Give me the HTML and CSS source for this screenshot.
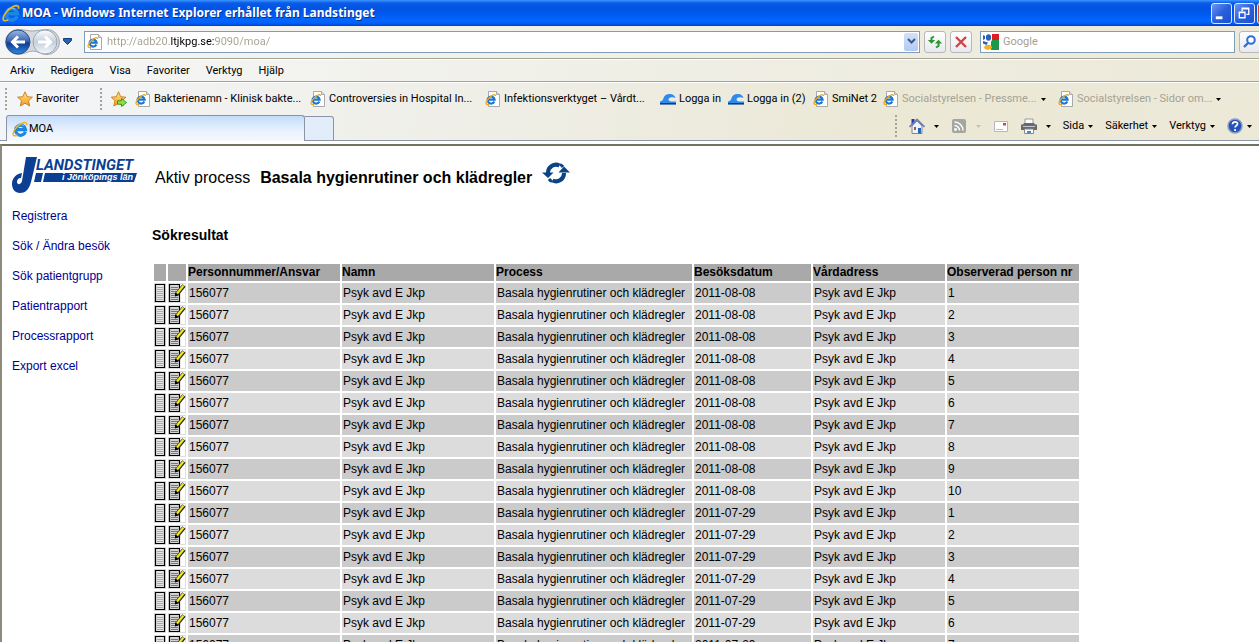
FILE: index.html
```html
<!DOCTYPE html>
<html lang="sv">
<head>
<meta charset="utf-8">
<title>MOA</title>
<link rel="stylesheet" href="styles.css">
</head>
<body>
<svg class="defs" aria-hidden="true">
  <defs>
    <linearGradient id="gold" x1="0" y1="0" x2="0" y2="1"><stop offset="0" stop-color="#ffe680"/><stop offset="1" stop-color="#f59a1d"/></linearGradient>
    <linearGradient id="ball" x1="0" y1="0" x2="0" y2="1"><stop offset="0" stop-color="#9db8e0"/><stop offset=".45" stop-color="#3d68b4"/><stop offset=".55" stop-color="#0f3c94"/><stop offset="1" stop-color="#2f8ae0"/></linearGradient>
    <linearGradient id="pale" x1="0" y1="0" x2="0" y2="1"><stop offset="0" stop-color="#fdfdfe"/><stop offset=".5" stop-color="#c3cedd"/><stop offset="1" stop-color="#f4f8fc"/></linearGradient>
    <symbol id="ie" viewBox="0 0 16 16">
      <path d="M13.4 10.8A5 5 0 1 1 13.600 8.600H5" fill="none" stroke="#1c86e0" stroke-width="3.200"/>
      <path d="M4.400 6a4.800 4.800 0 0 1 7.400-1.200" fill="none" stroke="#7cc8f8" stroke-width="1"/>
      <path d="M14.600 4.300C15.400 1.600 13 .6 9.600 2.400C5.500 4.500 1 9.800 1 13c0 2.400 2.400 2.200 4.600 1" fill="none" stroke="#f0b323" stroke-width="1.500"/>
    </symbol>
    <symbol id="page" viewBox="0 0 16 16">
      <path d="M3.500.5h8l3 3v12h-11z" fill="#fff" stroke="#a9a9ad"/>
      <path d="M11.500.5v3h3" fill="#ddd" stroke="#a9a9ad"/>
      <path d="M9.300 10.500A3.500 3.500 0 1 1 9.600 8.600H3.400" fill="none" stroke="#1976d2" stroke-width="2.200"/>
      <path d="M10.600 5c0-2.400-3.600-1-6.200 1.600S.2 12.500 1.400 13.200s2 .2 2.800-.2" fill="none" stroke="#f0a81c" stroke-width="1.300"/>
    </symbol>
    <symbol id="star" viewBox="0 0 16 16"><path d="M8 .8l2.200 4.900 5.200.5-3.900 3.500 1.200 5.300L8 12.200 3.300 15l1.200-5.300L.6 6.200l5.200-.5z" fill="url(#gold)" stroke="#c9781a" stroke-width=".9"/></symbol>
    <symbol id="staradd" viewBox="0 0 16 16"><path d="M7.500.8l2.200 4.900 5.200.5-3.900 3.500 1.200 5.300-4.700-2.800L2.800 15 4 9.700.3 6.200l5-.5z" fill="url(#gold)" stroke="#c9781a" stroke-width=".9"/><path d="M6.500 9.800h4V7.500l5 4-5 4v-2.300h-4z" fill="#8be04e" stroke="#2f8f1e" stroke-width=".9"/></symbol>
    <symbol id="cloud" viewBox="0 0 16 12"><path d="M0 11V8.500C2.500 8 3 7 3.500 5 4.500 2 7 .8 10 1c3 .2 5 1.600 5.500 4-2-.8-3.500-.8-5.500-.2C7.500 5.500 8.500 8.500 11 8.500H16V11z" fill="#2d8bea"/><path d="M0 10h16v1.600H0z" fill="#0a3f86"/></symbol>
    <symbol id="doc" viewBox="0 0 12 20"><path d="M0 0h12v20H0z" fill="#d8d8d8"/><path d="M1.500 1.500h9v17h-9z" fill="#e6e6e6" stroke="#000" stroke-width="1.200"/><path d="M3 4.500h6M3 6.500h6M3 8.500h6M3 10.500h6M3 12.500h6M3 14.500h6M3 16.500h6" stroke="#aaa"/></symbol>
    <symbol id="edit" viewBox="0 0 18 20"><path d="M0 0h18v20H0z" fill="#ddd"/><path d="M1 1h16v18H1z" fill="#fff"/><path d="M1.500 1.500h10v17h-10z" fill="#d4d4d4" stroke="#000" stroke-width="1.200"/><path d="M3 4.500h7M3 6.500h7M3 8.500h5M3 10.500h4M3 12.500h5M3 14.500h7M3 16.500h7" stroke="#777"/><path d="M8.500 11.500L16 2.500" stroke="#222" stroke-width="4.200"/><path d="M9 10.500l6.500-8" stroke="#f2e818" stroke-width="2.200"/><path d="M7 9.500l3.500 3L7 13.500z" fill="#000"/></symbol>
    <symbol id="down" viewBox="0 0 5 3"><path d="M0 0h5L2.500 3z" fill="currentColor"/></symbol>
  </defs>
</svg>

<header class="titlebar">
  <svg class="i18"><use href="#ie"/></svg>
  <span class="title">MOA - Windows Internet Explorer erhållet från Landstinget</span>
  <div class="winbtns">
    <button class="winbtn" aria-label="Minimera"><svg viewBox="0 0 20 20"><path d="M4 13h7v3H4z" fill="#fff"/></svg></button>
    <button class="winbtn" aria-label="Återställ"><svg viewBox="0 0 20 20"><path d="M7.500 8V4.500h7v6.500H12M7 5h8" fill="none" stroke="#fff" stroke-width="1.400"/><path d="M4.500 8.500h6v6h-6zM4 9h7" fill="none" stroke="#fff" stroke-width="1.400"/></svg></button>
    <button class="winbtn close" aria-label="Stäng"><svg viewBox="0 0 20 20"><path d="M5 5l10 10M15 5L5 15" stroke="#fff" stroke-width="2"/></svg></button>
  </div>
</header>

<div class="navbar">
  <div class="travel">
    <svg class="travelbg" viewBox="0 0 56 28"><path d="M14 1.500C20 1.500 23 3 28 3s10-1.500 15-1.500a12.500 12.500 0 0 1 0 25C37 26.500 34 23 29 23s-9 3.500-15 3.500a12.500 12.500 0 0 1 0-25z" fill="#d5d8dc" stroke="#a3a6aa"/></svg>
    <button class="round" aria-label="Bakåt"><svg viewBox="0 0 26 26"><circle cx="13" cy="13" r="12" fill="url(#ball)" stroke="#2b4c86"/><path d="M20 13H8M13 7.500L7.500 13l5.500 5.500" fill="none" stroke="#fff" stroke-width="3"/></svg></button>
    <button class="round" aria-label="Framåt"><svg viewBox="0 0 26 26"><circle cx="13" cy="13" r="12" fill="url(#pale)" stroke="#9ba6b5"/><path d="M6 13h12M13 7.500l5.500 5.500-5.500 5.500" fill="none" stroke="#fff" stroke-width="3"/></svg></button>
  </div>
  <button class="bare recent" aria-label="Senaste sidor"><svg viewBox="0 0 9 7"><path d="M.5.5h8v2L4.500 6.500.5 2.500z" fill="#2b62b0" stroke="#12407f"/></svg></button>
  <div class="box address">
    <svg class="i16"><use href="#page"/></svg>
    <input class="url" type="text" aria-label="Adress" value="http://adb20.ltjkpg.se:9090/moa/">
    <button class="drop" aria-label="Visa adresser"><svg viewBox="0 0 9 7"><path d="M1 1l3.500 3.500L8 1" fill="none" stroke="#3c5a86" stroke-width="2"/></svg></button>
  </div>
  <button class="tool" aria-label="Uppdatera"><svg viewBox="0 0 16 16"><path d="M7 2.500L4.500 4v2.500" fill="none" stroke="#2f9530" stroke-width="2"/><path d="M.8 6h7.400L4.500 9.800zM7.800 9.500h7.400L11.500 5.700z" fill="#2f9530"/><path d="M9 13.500l2.500-1.500V9" fill="none" stroke="#2f9530" stroke-width="2"/></svg></button>
  <button class="tool" aria-label="Stoppa"><svg viewBox="0 0 16 16"><path d="M3 3l10 10M13 3L3 13" stroke="#cf4444" stroke-width="2.400"/></svg></button>
  <div class="box search">
    <svg class="i16" viewBox="0 0 16 16"><path d="M0 0h16v16H0z" fill="#fff"/><path d="M9 0h7v6H9z" fill="#e11b22"/><path d="M9 6h7v10H8V8z" fill="#1a9a48"/><ellipse cx="5.500" cy="3.500" rx="2.600" ry="3.300" fill="#2a62b8"/><path d="M0 1l2 1v3L0 6zM0 7l5 1.500L3.500 11 0 9.500z" fill="#2a62b8"/><ellipse cx="5" cy="13.300" rx="3.800" ry="2.500" fill="#f5b21c"/></svg>
    <input class="query" type="text" aria-label="Sök" placeholder="Google">
  </div>
  <button class="tool go" aria-label="Sök på webben"><svg viewBox="0 0 16 16"><circle cx="9" cy="6" r="3.800" fill="#fff" stroke="#2f6fd6" stroke-width="2"/><path d="M6 9l-4 4" stroke="#2f6fd6" stroke-width="2.400"/></svg></button>
</div>

<nav class="menubar">
  <button class="bare">Arkiv</button><button class="bare">Redigera</button><button class="bare">Visa</button><button class="bare">Favoriter</button><button class="bare">Verktyg</button><button class="bare">Hjälp</button>
</nav>

<div class="chrome">
<div class="favbar">
  <span class="grip"></span>
  <button class="bare fav"><svg class="i16"><use href="#star"/></svg>Favoriter</button>
  <span class="grip"></span>
  <button class="bare add" aria-label="Lägg till i Favoriter"><svg class="i16"><use href="#staradd"/></svg></button>
  <a class="mark long" href="#"><svg class="i16"><use href="#page"/></svg>Bakterienamn - Klinisk bakte...</a>
  <a class="mark long" href="#"><svg class="i16"><use href="#page"/></svg>Controversies in Hospital In...</a>
  <a class="mark long" href="#"><svg class="i16"><use href="#page"/></svg>Infektionsverktyget – Vårdt...</a>
  <a class="mark live" href="#"><svg class="cloud"><use href="#cloud"/></svg>Logga in</a>
  <a class="mark live2" href="#"><svg class="cloud"><use href="#cloud"/></svg>Logga in (2)</a>
  <a class="mark smi" href="#"><svg class="i16"><use href="#page"/></svg>SmiNet 2</a>
  <a class="mark long feed" href="#"><svg class="i16"><use href="#page"/></svg><span class="feedname">Socialstyrelsen - Pressme...</span><svg class="caret"><use href="#down"/></svg></a>
  <a class="mark long feed" href="#"><svg class="i16"><use href="#page"/></svg><span class="feedname">Socialstyrelsen - Sidor om...</span><svg class="caret"><use href="#down"/></svg></a>
</div>
<div class="tabrow">
  <button class="tab"><svg class="i16"><use href="#ie"/></svg>MOA</button>
  <button class="newtab" aria-label="Ny flik"></button>
  <div class="commands">
    <span class="grip"></span>
    <button class="bare cmd wide" aria-label="Startsida"><svg class="i16" viewBox="0 0 16 16"><path d="M2.500 1h3v5h-3z" fill="#2335b8"/><path d="M3 8l5-5 5 5v7.500H3z" fill="#eef3fb" stroke="#7c88a0"/><path d="M.5 9L8 1.500 15.500 9" fill="none" stroke="#6c7fa8" stroke-width="1.600"/><path d="M9 10h3v5.500H9z" fill="#2b63b4"/><path d="M5 9h2v3H5z" fill="#9a6533"/></svg><svg class="caret"><use href="#down"/></svg></button>
    <button class="bare cmd wide rss" aria-label="Feeds"><svg class="i16" viewBox="0 0 16 16"><rect x="1" y="1" width="14" height="14" rx="2" fill="#a5a5a1"/><circle cx="4.500" cy="11.500" r="1.400" fill="#fff"/><path d="M3.500 7.500a5 5 0 0 1 5 5M3.500 4a8.500 8.500 0 0 1 8.500 8.500" fill="none" stroke="#fff" stroke-width="1.500"/></svg><svg class="caret"><use href="#down"/></svg></button>
    <button class="bare cmd" aria-label="Läs e-post"><svg class="i16" viewBox="0 0 16 16"><path d="M1.500 3.500h13v10h-13z" fill="#fff" stroke="#b5b5c6"/><path d="M3 11.500h7" stroke="#bbb"/><path d="M10 5h3v2.500h-3z" fill="#d6434f"/></svg></button>
    <button class="bare cmd wide" aria-label="Skriv ut"><svg class="i16" viewBox="0 0 16 16"><path d="M4 1h8v6H4z" fill="#fff" stroke="#999"/><path d="M0 6.500h2L3 5h10l1 1.500h2V12H0z" fill="#666b73"/><path d="M2 8.500h12" stroke="#c5c8cd"/><path d="M3.500 11h9v4.500h-9z" fill="#fff" stroke="#888"/><path d="M6 13h4v2H6z" fill="#3a8fc9"/></svg><svg class="caret"><use href="#down"/></svg></button>
    <button class="bare cmd">Sida<svg class="caret"><use href="#down"/></svg></button>
    <button class="bare cmd">Säkerhet<svg class="caret"><use href="#down"/></svg></button>
    <button class="bare cmd">Verktyg<svg class="caret"><use href="#down"/></svg></button>
    <button class="bare cmd" aria-label="Hjälp"><svg class="i16" viewBox="0 0 16 16"><circle cx="8" cy="8" r="7" fill="#2753b8" stroke="#8b9dc4" stroke-width="1.500"/><path d="M5.500 6.200C5.500 3 10.700 3.200 10.500 6c-.1 1.700-2.400 1.700-2.400 3.600M8.100 11v2" fill="none" stroke="#fff" stroke-width="1.700"/></svg><svg class="caret"><use href="#down"/></svg></button>
  </div>
</div>
</div>

<div class="content">
  <aside class="side">
    <svg class="logo" viewBox="0 0 125 39" role="img" aria-label="Landstinget i Jönköpings län">
      <path d="M14 2h11l-6 25c-2 8-6 11-11 11-5 0-8-4-8-9 0-6 4-10 10-11l-1 5c-3 0-4 2-4 4 0 3 4 3 5-1z" fill="#0b3f94"/>
      <path d="M24 18h7l-2 9h-7zM33 18h92l-3 9H31z" fill="#0b3f94"/>
      <text class="logoname" x="24" y="15">LANDSTINGET</text>
      <text class="logosub" x="50" y="25">i Jönköpings län</text>
    </svg>
    <nav class="links">
      <a href="#">Registrera</a>
      <a href="#">Sök / Ändra besök</a>
      <a href="#">Sök patientgrupp</a>
      <a href="#">Patientrapport</a>
      <a href="#">Processrapport</a>
      <a href="#">Export excel</a>
    </nav>
  </aside>
  <main class="main">
    <div class="process"><span>Aktiv process</span><strong>Basala hygienrutiner och klädregler</strong>
      <button class="bare swap" aria-label="Byt process"><svg viewBox="0 0 28 22"><path d="M6 11a8 8 0 0 1 11.500-7.500M22 11a8 8 0 0 1-11.500 7.500" fill="none" stroke="#0a4388" stroke-width="4"/><path d="M0 10.500h11.500L6 16zM16.500 10.500H28L22 4.500z" fill="#0a4388"/><path d="M18 2.500a8 8 0 0 1 3 2.500M10 19.500a8 8 0 0 1-3-2.500" fill="none" stroke="#0a4388" stroke-width="3"/></svg></button>
    </div>
    <h1 class="heading">Sökresultat</h1>
    <table class="results">
      <colgroup><col class="c-doc"><col class="c-edit"><col class="c-id"><col class="c-name"><col class="c-proc"><col class="c-date"><col class="c-addr"><col class="c-nr"></colgroup>
      <thead><tr><th></th><th></th><th>Personnummer/Ansvar</th><th>Namn</th><th>Process</th><th>Besöksdatum</th><th>Vårdadress</th><th>Observerad person nr</th></tr></thead>
      <tbody>
        <tr><td><svg class="docicon"><use href="#doc"/></svg></td><td><svg class="editicon"><use href="#edit"/></svg></td><td>156077</td><td>Psyk avd E Jkp</td><td>Basala hygienrutiner och klädregler</td><td>2011-08-08</td><td>Psyk avd E Jkp</td><td>1</td></tr>
        <tr><td><svg class="docicon"><use href="#doc"/></svg></td><td><svg class="editicon"><use href="#edit"/></svg></td><td>156077</td><td>Psyk avd E Jkp</td><td>Basala hygienrutiner och klädregler</td><td>2011-08-08</td><td>Psyk avd E Jkp</td><td>2</td></tr>
        <tr><td><svg class="docicon"><use href="#doc"/></svg></td><td><svg class="editicon"><use href="#edit"/></svg></td><td>156077</td><td>Psyk avd E Jkp</td><td>Basala hygienrutiner och klädregler</td><td>2011-08-08</td><td>Psyk avd E Jkp</td><td>3</td></tr>
        <tr><td><svg class="docicon"><use href="#doc"/></svg></td><td><svg class="editicon"><use href="#edit"/></svg></td><td>156077</td><td>Psyk avd E Jkp</td><td>Basala hygienrutiner och klädregler</td><td>2011-08-08</td><td>Psyk avd E Jkp</td><td>4</td></tr>
        <tr><td><svg class="docicon"><use href="#doc"/></svg></td><td><svg class="editicon"><use href="#edit"/></svg></td><td>156077</td><td>Psyk avd E Jkp</td><td>Basala hygienrutiner och klädregler</td><td>2011-08-08</td><td>Psyk avd E Jkp</td><td>5</td></tr>
        <tr><td><svg class="docicon"><use href="#doc"/></svg></td><td><svg class="editicon"><use href="#edit"/></svg></td><td>156077</td><td>Psyk avd E Jkp</td><td>Basala hygienrutiner och klädregler</td><td>2011-08-08</td><td>Psyk avd E Jkp</td><td>6</td></tr>
        <tr><td><svg class="docicon"><use href="#doc"/></svg></td><td><svg class="editicon"><use href="#edit"/></svg></td><td>156077</td><td>Psyk avd E Jkp</td><td>Basala hygienrutiner och klädregler</td><td>2011-08-08</td><td>Psyk avd E Jkp</td><td>7</td></tr>
        <tr><td><svg class="docicon"><use href="#doc"/></svg></td><td><svg class="editicon"><use href="#edit"/></svg></td><td>156077</td><td>Psyk avd E Jkp</td><td>Basala hygienrutiner och klädregler</td><td>2011-08-08</td><td>Psyk avd E Jkp</td><td>8</td></tr>
        <tr><td><svg class="docicon"><use href="#doc"/></svg></td><td><svg class="editicon"><use href="#edit"/></svg></td><td>156077</td><td>Psyk avd E Jkp</td><td>Basala hygienrutiner och klädregler</td><td>2011-08-08</td><td>Psyk avd E Jkp</td><td>9</td></tr>
        <tr><td><svg class="docicon"><use href="#doc"/></svg></td><td><svg class="editicon"><use href="#edit"/></svg></td><td>156077</td><td>Psyk avd E Jkp</td><td>Basala hygienrutiner och klädregler</td><td>2011-08-08</td><td>Psyk avd E Jkp</td><td>10</td></tr>
        <tr><td><svg class="docicon"><use href="#doc"/></svg></td><td><svg class="editicon"><use href="#edit"/></svg></td><td>156077</td><td>Psyk avd E Jkp</td><td>Basala hygienrutiner och klädregler</td><td>2011-07-29</td><td>Psyk avd E Jkp</td><td>1</td></tr>
        <tr><td><svg class="docicon"><use href="#doc"/></svg></td><td><svg class="editicon"><use href="#edit"/></svg></td><td>156077</td><td>Psyk avd E Jkp</td><td>Basala hygienrutiner och klädregler</td><td>2011-07-29</td><td>Psyk avd E Jkp</td><td>2</td></tr>
        <tr><td><svg class="docicon"><use href="#doc"/></svg></td><td><svg class="editicon"><use href="#edit"/></svg></td><td>156077</td><td>Psyk avd E Jkp</td><td>Basala hygienrutiner och klädregler</td><td>2011-07-29</td><td>Psyk avd E Jkp</td><td>3</td></tr>
        <tr><td><svg class="docicon"><use href="#doc"/></svg></td><td><svg class="editicon"><use href="#edit"/></svg></td><td>156077</td><td>Psyk avd E Jkp</td><td>Basala hygienrutiner och klädregler</td><td>2011-07-29</td><td>Psyk avd E Jkp</td><td>4</td></tr>
        <tr><td><svg class="docicon"><use href="#doc"/></svg></td><td><svg class="editicon"><use href="#edit"/></svg></td><td>156077</td><td>Psyk avd E Jkp</td><td>Basala hygienrutiner och klädregler</td><td>2011-07-29</td><td>Psyk avd E Jkp</td><td>5</td></tr>
        <tr><td><svg class="docicon"><use href="#doc"/></svg></td><td><svg class="editicon"><use href="#edit"/></svg></td><td>156077</td><td>Psyk avd E Jkp</td><td>Basala hygienrutiner och klädregler</td><td>2011-07-29</td><td>Psyk avd E Jkp</td><td>6</td></tr>
        <tr><td><svg class="docicon"><use href="#doc"/></svg></td><td><svg class="editicon"><use href="#edit"/></svg></td><td>156077</td><td>Psyk avd E Jkp</td><td>Basala hygienrutiner och klädregler</td><td>2011-07-29</td><td>Psyk avd E Jkp</td><td>7</td></tr>
      </tbody>
    </table>
  </main>
</div>
</body>
</html>
```
FILE: styles.css
```css
* { box-sizing: border-box; }
body {
  margin: 0;
  height: 100vh;
  overflow: hidden;
  display: flex;
  flex-direction: column;
  background: #fff;
  color: #000;
  font: 11px/16px Roboto, sans-serif;
}
svg { display: block; flex: none; }
button, input { font: inherit; color: inherit; margin: 0; padding: 0; }
.defs { position: absolute; width: 0; height: 0; }
.i16 { width: 16px; height: 16px; }
.i18 { width: 18px; height: 18px; }
.bare { background: none; border: 0; display: flex; align-items: center; white-space: nowrap; }
.caret { width: 5px; height: 3px; color: #000; }

.titlebar {
  flex: none;
  height: 26px;
  display: flex;
  align-items: center;
  gap: 2px;
  padding-left: 2px;
  background: linear-gradient(#3d95ff 0, #0a5be8 3px, #0054e3 8px, #0058ee 14px, #0366ff 20px, #0061fc 23px, #0040c8 26px);
  overflow: hidden;
}
.title {
  flex: 1;
  color: #fff;
  font: bold 12px/18px "Noto Sans", sans-serif;
  text-shadow: 1px 1px 0 #0a2f8c;
  white-space: nowrap;
}
.winbtns { display: flex; gap: 2px; margin-right: -19px; }
.winbtn {
  width: 21px;
  height: 21px;
  border: 1px solid #dfe8fa;
  border-radius: 3px;
  background: linear-gradient(135deg, #6d96f2, #2a5fdc 50%, #1c4fd0);
}
.winbtn.close { background: #d8482a; }

.navbar {
  flex: none;
  height: 33px;
  display: flex;
  align-items: center;
  padding: 0 0 1px 4px;
  background: linear-gradient(90deg, #f3f5f7, #f1f0e6 50%, #ece9d8);
  border-bottom: 1px solid #a5a396;
  overflow: hidden;
}
.travel { position: relative; display: flex; gap: 1px; width: 56px; padding-left: 1px; }
.travelbg { position: absolute; left: 0; top: -1px; width: 56px; height: 28px; }
.round { position: relative; width: 26px; height: 26px; border: 0; background: none; }
.recent { margin: 0 12px 0 3px; }
.recent svg { width: 9px; height: 7px; }
.box {
  display: flex;
  align-items: center;
  height: 22px;
  border: 1px solid #7f9db9;
  background: #fff;
}
.address { flex: 1; padding: 0 1px 0 2px; margin-right: 4px; }
.box input { flex: 1; min-width: 0; height: 18px; border: 0; outline: 0; background: none; }
.box .url {
  margin-left: 4px;
  background: linear-gradient(90deg, #a5a090 64px, #000 64px, #000 108px, #a5a090 108px);
  -webkit-background-clip: text;
  background-clip: text;
  color: transparent;
}
.drop {
  width: 14px;
  height: 18px;
  border: 0;
  border-radius: 2px;
  display: grid;
  place-items: center;
  background: linear-gradient(#d3e0fb, #b2c8f5);
}
.drop svg { width: 9px; height: 7px; }
.tool {
  flex: none;
  width: 22px;
  height: 22px;
  margin-right: 4px;
  border: 1px solid #b6b8be;
  border-radius: 3px;
  background: linear-gradient(#fff, #e6e9ee);
  display: grid;
  place-items: center;
}
.tool svg { width: 16px; height: 16px; }
.search { width: 255px; padding-left: 2px; margin: 0 4px; }
.query { padding-left: 4px; }
.query::placeholder { color: #a5a090; opacity: 1; }
.go { margin-right: -2px; }

.menubar {
  flex: none;
  height: 23px;
  display: flex;
  align-items: center;
  gap: 16px;
  padding-left: 10px;
  background: linear-gradient(90deg, #f5f6f7, #f0efe6 50%, #ece9d8);
  border-top: 1px solid #fff;
  border-bottom: 1px solid #a5a396;
}

.chrome {
  flex: none;
  background: linear-gradient(100deg, #f3f5f8, #efeee6 40%, #ebe8d6 70%, #ece9d8);
  border-top: 1px solid #fff;
}
.favbar { display: flex; align-items: center; height: 32px; padding-left: 5px; overflow: hidden; }
.grip {
  flex: none;
  width: 2px;
  height: 22px;
  background: repeating-linear-gradient(#a5a296 0 2px, transparent 2px 4px);
}
.fav { gap: 3px; width: 83px; margin-left: 10px; }
.add { width: 24px; margin-left: 9px; }
.mark { flex: none; display: flex; align-items: center; gap: 3px; color: #000; text-decoration: none; white-space: nowrap; }
.long { width: 175px; }
.live { width: 68px; }
.live2 { width: 85px; }
.smi { width: 70px; }
.cloud { width: 16px; height: 12px; }
.feed { color: #a5a294; }
.feedname { width: 136px; }

.tabrow { display: flex; align-items: flex-end; height: 26px; padding-left: 6px; border-bottom: 1px solid #8a96a8; }
.tab {
  width: 299px;
  height: 26px;
  margin-bottom: -1px;
  padding-left: 5px;
  display: flex;
  align-items: center;
  gap: 1px;
  border: 1px solid #8a94a6;
  border-bottom: 0;
  border-radius: 3px 3px 0 0;
  background: linear-gradient(#c3dcfa, #e9f2fd 60%, #f6f9fd);
}
.newtab { width: 29px; height: 24px; border: 1px solid #8a94a6; border-bottom: 0; border-left: 0; border-radius: 0 3px 0 0; background: #e2edf9; }
.commands { flex: 1; display: flex; justify-content: flex-end; align-items: center; height: 26px; gap: 12px; padding: 0 7px 2px 0; }
.cmd { gap: 4px; }
.cmd.wide { gap: 9px; }
.rss .caret { color: #c4c1b2; }

.content {
  flex: 1;
  min-height: 0;
  display: flex;
  margin-top: 3px;
  border-top: 2px solid #75715f;
  border-left: 2px solid #8e8b7c;
  overflow: hidden;
  font-family: "Liberation Sans", Arial, sans-serif;
}
.side { flex: none; width: 142px; padding: 9px 0 0 10px; }
.logo { width: 125px; height: 39px; }
.logoname { font: italic 700 15px Roboto, sans-serif; fill: #0b3f94; }
.logosub { font: italic bold 9px "Liberation Sans", sans-serif; fill: #fff; }
.links { display: flex; flex-direction: column; gap: 14px; margin-top: 14px; }
.links a { color: #000090; font-size: 12px; line-height: 16px; text-decoration: none; white-space: nowrap; }
.main { flex: 1; padding: 16px 0 0 8px; }
.process { display: flex; align-items: center; gap: 10px; height: 32px; padding-left: 3px; font-size: 16px; line-height: 20px; white-space: nowrap; }
.swap { height: 32px; align-items: flex-start; }
.swap svg { width: 28px; height: 22px; }
.heading { margin: 32px 0 18px; font-size: 14px; line-height: 18px; font-weight: bold; }
.results { table-layout: fixed; width: 929px; border-collapse: separate; border-spacing: 2px; font-size: 12px; line-height: 17px; }
.results th { height: 17px; padding: 0; text-align: left; background: #a9a9a9; white-space: nowrap; }
.results td { height: 20px; padding: 0 0 0 1px; white-space: nowrap; background: #dcdcdc; }
.results tbody tr:nth-child(odd) td { background: #cbcbcb; }
.results td:nth-child(1), .results td:nth-child(2) { padding: 0; }
.docicon { width: 12px; height: 20px; }
.editicon { width: 18px; height: 20px; }
.c-doc { width: 12px; }
.c-edit { width: 18px; }
.c-id, .c-name { width: 152px; }
.c-proc { width: 196px; }
.c-date { width: 117px; }
.c-addr, .c-nr { width: 132px; }
```
